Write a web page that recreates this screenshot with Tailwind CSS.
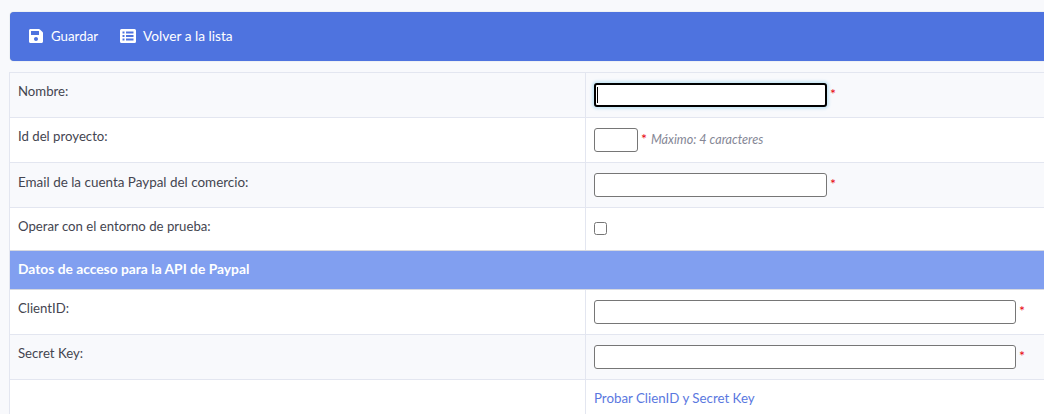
<!DOCTYPE html>
<html lang="es">
<head>
<meta charset="utf-8">
<script src="https://cdn.jsdelivr.net/npm/@tailwindcss/browser@4"></script>
</head>
<body class="bg-white">
<div class="w-[1044px] h-[414px] overflow-hidden bg-[#f8f9fc] font-['Lato','Noto_Sans',sans-serif] text-[13.2px] text-[#444550] pl-[10px] pt-[12px]">
  <div class="h-[49px] bg-[#4e73df] rounded-l-[4px] flex items-center pl-[19px] text-white text-[13.300px] shadow-[0_0_1px_#9aa]">
    <svg class="w-[14px] h-[14px] mr-[8px] -mt-[2px]" viewBox="0 32 448 448" fill="#fff"><path d="M433.941 129.941l-83.882-83.882A48 48 0 0 0 316.118 32H48C21.490 32 0 53.490 0 80v352c0 26.510 21.490 48 48 48h352c26.510 0 48-21.490 48-48V163.882a48 48 0 0 0-14.059-33.941zM224 416c-35.346 0-64-28.654-64-64 0-35.346 28.654-64 64-64s64 28.654 64 64c0 35.346-28.654 64-64 64zm96-304.520V212c0 6.627-5.373 12-12 12H76c-6.627 0-12-5.373-12-12V108c0-6.627 5.373-12 12-12h228.520c3.183 0 6.235 1.264 8.485 3.515l3.480 3.480A11.996 11.996 0 0 1 320 111.480z"/></svg>
    <span>Guardar</span>
    <svg class="w-[16px] h-[14px] ml-[22px] mr-[7px] -mt-[2px]" viewBox="0 0 16 14"><path fill="#fff" fill-rule="evenodd" d="M1.500 0h13A1.500 1.500 0 0 1 16 1.500v11a1.500 1.500 0 0 1-1.500 1.500h-13A1.500 1.500 0 0 1 0 12.500v-11A1.500 1.500 0 0 1 1.500 0zM2.500 2.500v2h2v-2zM6 2.500v2h7.500v-2zM2.500 6v2h2V6zM6 6v2h7.500V6zM2.500 9.500v2h2v-2zM6 9.500v2h7.500v-2z"/></svg>
    <span class="text-[13.700px]">Volver a la lista</span>
  </div>
  <div class="mt-[11px] border-t border-l border-[#e3e6f0] -ml-px">
    <div class="flex h-[45px] border-b border-[#e3e6f0] bg-[#f8f9fc]">
      <div class="w-[576px] border-r border-[#e3e6f0] pl-[8px] pt-[9px] shrink-0">Nombre:</div>
      <div class="flex items-center pl-[8px] gap-[3px]">
        <div class="w-[233px] h-[24px] bg-white border-2 border-black rounded-[3px] shadow-[0_0_3px_2px_#c8e6f5] flex items-center pl-[1px]"><div class="w-px h-[16px] bg-black"></div></div>
        <span class="text-red-600 text-[14px] -mt-[3px]">*</span>
      </div>
    </div>
    <div class="flex h-[45px] border-b border-[#e3e6f0] bg-white">
      <div class="w-[576px] border-r border-[#e3e6f0] pl-[8px] pt-[9px] shrink-0">Id del proyecto:</div>
      <div class="flex items-center pl-[8px]">
        <input class="w-[44px] h-[24px] border border-[#767676] rounded-[3px] bg-white">
        <span class="text-red-600 text-[14px] ml-[3px] -mt-[3px]">*</span>
        <span class="italic text-[#858796] text-[12.600px] ml-[4px]">Máximo: 4 caracteres</span>
      </div>
    </div>
    <div class="flex h-[45px] border-b border-[#e3e6f0] bg-[#f8f9fc]">
      <div class="w-[576px] border-r border-[#e3e6f0] pl-[8px] pt-[9px] shrink-0 text-[13.450px]">Email de la cuenta Paypal del comercio:</div>
      <div class="flex items-center pl-[8px] gap-[3px]">
        <input class="w-[233px] h-[24px] border border-[#767676] rounded-[3px] bg-white">
        <span class="text-red-600 text-[14px] -mt-[3px]">*</span>
      </div>
    </div>
    <div class="flex h-[42px] bg-white">
      <div class="w-[576px] border-r border-[#e3e6f0] pl-[8px] pt-[9px] shrink-0">Operar con el entorno de prueba:</div>
      <div class="flex items-center pl-[8px]">
        <div class="w-[13px] h-[13px] -mt-[2px] border border-[#767676] rounded-[2.500px] bg-white"></div>
      </div>
    </div>
    <div class="h-[40px] bg-[#819ff0] border-y border-[#d6d8e0] flex items-center pl-[8px] pb-[2px] text-white font-bold text-[13.800px]">Datos de acceso para la API de Paypal</div>
    <div class="flex h-[45px] border-b border-[#e3e6f0] bg-white">
      <div class="w-[576px] border-r border-[#e3e6f0] pl-[8px] pt-[9px] shrink-0">ClientID:</div>
      <div class="flex items-center pl-[8px] gap-[3px]">
        <input class="w-[422px] h-[24px] border border-[#767676] rounded-[3px] bg-white">
        <span class="text-red-600 text-[14px] -mt-[3px]">*</span>
      </div>
    </div>
    <div class="flex h-[45px] border-b border-[#e3e6f0] bg-[#f8f9fc]">
      <div class="w-[576px] border-r border-[#e3e6f0] pl-[8px] pt-[9px] shrink-0">Secret Key:</div>
      <div class="flex items-center pl-[8px] gap-[3px]">
        <input class="w-[422px] h-[24px] border border-[#767676] rounded-[3px] bg-white">
        <span class="text-red-600 text-[14px] -mt-[3px]">*</span>
      </div>
    </div>
    <div class="flex h-[45px] bg-white">
      <div class="w-[576px] border-r border-[#e3e6f0] shrink-0"></div>
      <div class="pl-[8px] pt-[9px]"><a href="#" class="text-[#5a78e0] text-[13.300px]">Probar ClienID y Secret Key</a></div>
    </div>
  </div>
</div>
</body>
</html>
